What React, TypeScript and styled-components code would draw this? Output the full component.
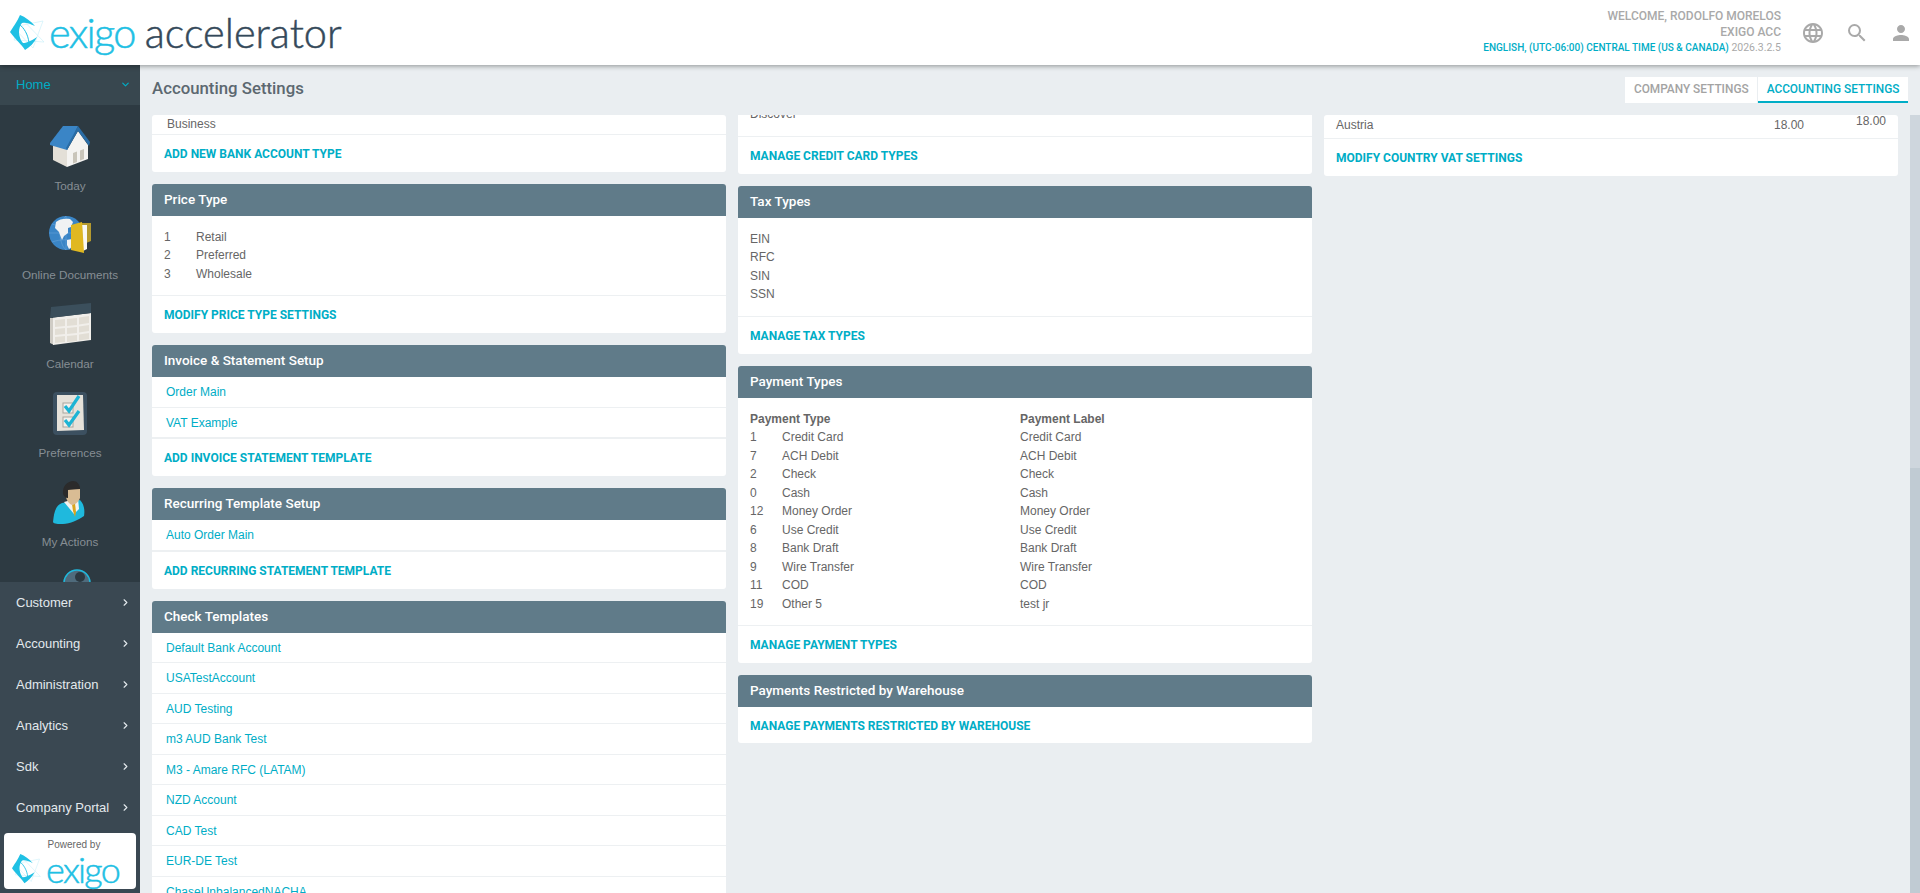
import { FC } from 'react'
import styled, { createGlobalStyle } from 'styled-components'
import { MdLanguage, MdSearch, MdPerson } from 'react-icons/md'
import { ChevronDown, ChevronRight } from 'lucide-react'

const GlobalStyle = createGlobalStyle`
  html, body {
    margin: 0;
    height: 100%;
    overflow: hidden;
    background: #eaeef1;
    font-family: "Liberation Sans", Arial, sans-serif;
  }
  * { box-sizing: border-box; }
`

const Page = styled.div`
  display: flex;
  flex-direction: column;
  width: 1920px;
  height: 893px;
`

const Header = styled.header`
  position: relative;
  z-index: 2;
  display: flex;
  justify-content: space-between;
  align-items: center;
  flex: 0 0 65px;
  padding: 0 7px 0 10px;
  background: white;
  box-shadow: 0 1px 5px rgba(0, 0, 0, 0.4);
`

const LogoWrap = styled.div`
  display: flex;
  align-items: center;
`

const LogoWord = styled.span<{ $dark?: boolean; $size: number; $gap: number }>`
  margin-left: ${p => p.$gap}px;
  font-family: Lato, "Open Sans", sans-serif;
  font-weight: 300;
  font-size: ${p => p.$size}px;
  line-height: 1;
  letter-spacing: ${p => (p.$dark ? 0 : -1.7)}px;
  color: ${p => (p.$dark ? '#34495a' : '#1fc0e4')};
  -webkit-text-stroke: 0.5px ${p => (p.$dark ? '#34495a' : '#1fc0e4')};
`

const HeaderRight = styled.div`
  display: flex;
  align-items: center;
`

const UserInfo = styled.div`
  margin-right: 20px;
  text-align: right;
  font-family: Roboto, sans-serif;
  font-weight: 500;
  color: #a9a9a9;
  font-size: 12px;
  line-height: 15.5px;
`

const Locale = styled.div`
  font-size: 10.5px;
  font-weight: 400;
  color: #a9a9a9;
  span { color: #00adc6; font-size: 10px; font-weight: 500; }
`

const HeaderIcons = styled.div`
  display: flex;
  gap: 20px;
  color: #a9a9a9;
  svg { display: block; }
`

const Body = styled.div`
  display: flex;
  flex: 1;
  min-height: 0;
`

const Sidebar = styled.nav`
  display: flex;
  flex-direction: column;
  flex: 0 0 140px;
  background: #2d3a42;
`

const HomeRow = styled.div`
  display: flex;
  justify-content: space-between;
  align-items: center;
  flex: 0 0 40px;
  padding: 0 9px 2px 16px;
  background: #38474f;
  color: #00adc6;
  font-size: 13px;
`

const Launcher = styled.div`
  flex: 1;
  min-height: 0;
  overflow: hidden;
  padding-top: 19px;
`

const LaunchItem = styled.div`
  display: flex;
  flex-direction: column;
  align-items: center;
  height: 89px;
`

const LaunchLabel = styled.div`
  margin-top: 11px;
  font-size: 11.7px;
  line-height: 14px;
  color: #868e94;
`

const MenuList = styled.div`
  flex: 0 0 311px;
  padding-bottom: 4px;
  background: #3a4852;
`

const MenuRow = styled.div`
  display: flex;
  justify-content: space-between;
  align-items: center;
  height: 41px;
  padding: 0 9px 1px 16px;
  color: #e3e9ed;
  font-size: 13px;
`

const PoweredBox = styled.div`
  display: flex;
  flex-direction: column;
  align-items: center;
  height: 56px;
  margin: 5px 4px 0;
  padding: 6px 0 0 8px;
  border-radius: 4px;
  background: white;
  color: #666;
  font-size: 10px;
  line-height: 12px;
`

const PoweredLogo = styled.div`
  display: flex;
  align-items: center;
  align-self: flex-start;
`

const Main = styled.main`
  display: flex;
  flex-direction: column;
  flex: 1;
  min-width: 0;
`

const TitleBar = styled.div`
  display: flex;
  justify-content: space-between;
  align-items: center;
  flex: 0 0 50px;
  padding: 0 12px;
`

const Title = styled.h1`
  margin: 0 0 4px;
  font-family: Roboto, sans-serif;
  font-weight: 500;
  font-size: 16.8px;
  color: #5c6870;
`

const Tabs = styled.div`
  display: flex;
  gap: 1px;
`

const Tab = styled.div<{ $active?: boolean }>`
  height: 26px;
  padding: 0 8.5px;
  background: white;
  font-family: Roboto, sans-serif;
  font-weight: 500;
  font-size: 11.85px;
  line-height: 25px;
  color: ${p => (p.$active ? '#00adc6' : '#a3a3a3')};
  border-bottom: 2px solid ${p => (p.$active ? '#00adc6' : 'white')};
`

const ScrollArea = styled.div`
  display: flex;
  flex: 1;
  min-height: 0;
  padding-left: 12px;
`

const Columns = styled.div`
  display: grid;
  grid-template-columns: repeat(3, 574px);
  gap: 12px;
  flex: 1;
  min-height: 0;
`

const Column = styled.div`
  display: flex;
  flex-direction: column;
  gap: 12px;
  min-height: 0;
  overflow: hidden;
`

const ScrollTrack = styled.div`
  flex: 0 0 10px;
  margin-left: 12px;
  padding-top: 353px;
  background: #ced6dd;
`

const ScrollThumb = styled.div`
  height: 100%;
  background: #c0cbd3;
`

const Panel = styled.section<{ $offset?: number }>`
  flex-shrink: 0;
  margin-top: ${p => (p.$offset ? -p.$offset : 0)}px;
  border-radius: 3px;
  background: white;
`

const PanelHead = styled.h2`
  height: 32px;
  margin: 0;
  padding: 0 12px;
  border-radius: 3px 3px 0 0;
  background: #607b89;
  font-family: Roboto, sans-serif;
  font-weight: 500;
  font-size: 13.5px;
  line-height: 30px;
  color: white;
`

const PanelBody = styled.div<{ $flushTop?: boolean }>`
  padding: ${p => (p.$flushTop ? 0 : 12)}px 12px 12px;
  font-size: 12px;
  line-height: 18.5px;
  color: #666;
`

const TableRow = styled.div<{ $wide?: boolean }>`
  display: grid;
  grid-template-columns: ${p => (p.$wide ? '32px 238px 1fr' : '32px 1fr')};
`

const HeadCell = styled.div<{ $span?: boolean }>`
  grid-column: ${p => (p.$span ? '1 / span 2' : 'auto')};
  font-weight: 700;
`

const ClippedRow = styled.div`
  height: 18.5px;
  padding-left: 15px;
  font-size: 12px;
  line-height: 18px;
  color: #666;
`

const VatRow = styled.div`
  display: grid;
  grid-template-columns: 1fr 82px 30px;
  align-items: start;
  height: 23px;
  padding: 0 12px;
  font-size: 12px;
  line-height: 20px;
  color: #666;
`

const RaisedCell = styled.span`
  margin-top: -4px;
`

const LinkRow = styled.div`
  height: 30.5px;
  padding-left: 14px;
  border-bottom: 1px solid #edf0f2;
  font-size: 12px;
  line-height: 30px;
  color: #00adc6;
`

const PanelFooter = styled.div<{ $plain?: boolean }>`
  height: ${p => (p.$plain ? 36 : 38)}px;
  padding: 1px 0 0 12px;
  border-top: ${p => (p.$plain ? 'none' : '1px solid #edf0f2')};
  font-family: Roboto, sans-serif;
  font-weight: 700;
  font-size: 12px;
  line-height: 37px;
  color: #00adc6;
  text-transform: uppercase;
`

const LogoMark: FC<{ size: number }> = ({ size }) => (
  <svg width={size} height={size} viewBox="0 0 36 36">
    <g fill="none" stroke="#c4eef8" strokeWidth="0.6">
      <path d="M3 12 L33 6 L23 33 Z" />
      <path d="M10 2 L34 27 L4 25 Z" />
    </g>
    <path fill="none" stroke="#1fc0e4" strokeWidth="1" d="M9 9 C14 13 18 19 19 28" />
    <path fill="#1fc0e4" d="M0 17 C3 12 7 7 10 0 C15 2 21 6 25 11 C19 8 15 7 12 8 C10 10 9 14 9 17 C9 21 11 26 13 28 C16 28 21 26 27 22 C24 28 20 32 15 35 C12 30 5 24 0 17 Z" />
  </svg>
)

const TodayIcon = () => (
  <svg width="44" height="44" viewBox="0 0 44 44">
    <path fill="#e3dfd7" d="M5 20 L19 22 V43 L5 36 Z" />
    <path fill="#f4f3f1" d="M19 26 L30 7 L40 21 V35 L19 43 Z" />
    <path fill="#c9c5ba" d="M25 29 L29 27.5 V38 L25 39.5 Z M32 26.5 L36 25 V35 L32 36.5 Z" />
    <path fill="#3a85c6" d="M2 19 L15 2 H30 L19 26 L2 21 Z" />
    <path fill="#2a6da6" d="M30 2 L42 18 L41 22 L30 7 L19 26 L18 24 Z" />
  </svg>
)

const DocumentsIcon = () => (
  <svg width="44" height="44" viewBox="0 0 44 44">
    <circle cx="18" cy="20" r="17" fill="#3a85c6" />
    <path fill="none" stroke="#6ea6d8" strokeWidth="0.5" d="M1 20 H35 M18 3 V37 M4 11 C12 14 24 14 32 11 M4 29 C12 26 24 26 32 29 M18 3 C10 10 10 30 18 37" />
    <path fill="#f0f2f3" d="M8 9 C11 6 17 5 22 6 L25 9 L23 14 L20 15 L20 20 L16 23 L14 27 L12 22 L11 19 L7 15 Z M19 27 L24 26 L24 34 L21 36 L19 32 Z" />
    <path fill="#b59a2e" d="M33 10 H43 V28 L36 31 Z" />
    <path fill="#f8f8f6" d="M34 12 H39 V36 L35 38 Z" />
    <path fill="#e0b821" d="M23 12 L34 9 L36 40 L23 37 Z" />
  </svg>
)

const CalendarIcon = () => (
  <svg width="44" height="44" viewBox="0 0 44 44">
    <path fill="#cfccc5" d="M2 16 L6 16 V43 L2 41 Z" />
    <path fill="#f1efeb" d="M5 15.5 L43 11 V38 L5 43 Z" />
    <path fill="#e2ded5" d="M7 18 L17 17 V24 L7 25 Z M19 17 L29 16 V23 L19 24 Z M31 15.5 L41 14 V21 L31 22.5 Z M7 27 L17 26 V32 L7 33 Z M19 26 L29 25 V31 L19 32 Z M31 24.5 L41 23 V29 L31 30.5 Z M7 35 L17 34 V40 L7 41 Z M19 34 L29 33 V39 L19 40 Z M31 32.5 L41 31 V37 L31 38.5 Z" />
    <path fill="#3b4f5c" d="M3 5 L43 1 V11 L2 16 Z" />
  </svg>
)

const PreferencesIcon = () => (
  <svg width="44" height="44" viewBox="0 0 44 44">
    <rect x="5" y="1" width="34" height="43" rx="4" fill="#3c5060" />
    <path fill="#e6e2da" d="M9 4 H35 L36 39 L9 40 Z" />
    <rect x="15" y="12" width="10" height="10" fill="#f2f0ec" stroke="#a9a69e" />
    <rect x="15" y="26" width="10" height="10" fill="#f2f0ec" stroke="#a9a69e" />
    <path fill="none" stroke="#1db4d4" strokeWidth="3.2" d="M17 15 L21 20 L31 5 M17 29 L21 34 L31 20" />
  </svg>
)

const ActionsIcon = () => (
  <svg width="44" height="44" viewBox="0 0 44 44">
    <path fill="#1fb9dd" d="M5 42 C6 33 7 26 14 23 L32 20 C36 24 37 30 36 36 C30 40 22 44 15 44 C10 44 6 44 5 42 Z" />
    <path fill="#f3f3f0" d="M16 22 L30 18 L31 29 L26 34 Z" />
    <path fill="#d9a61e" d="M24 24 L27 23 L28 32 L27 37 L25 31 Z" />
    <path fill="#d9bc94" d="M18 9 H32 V18 C30 23 26 25 24 25 C21 24 18 20 18 16 Z" />
    <path fill="#2b2b2b" d="M15 14 C14 6 20 1 25 1 C29 1 31 4 32 7 L32 9 C27 9 23 10 20 10 L20 18 C17 18 16 16 15 14 Z" />
  </svg>
)

const AnalyticsIcon = () => (
  <svg width="44" height="44" viewBox="0 0 44 44">
    <g transform="translate(7 0)">
      <circle cx="22" cy="14" r="13" fill="#4f6b7c" stroke="#1fb9dd" strokeWidth="1.5" />
      <circle cx="25" cy="8" r="5" fill="#2b3840" />
    </g>
  </svg>
)

const launchers = [
  { label: 'Today', icon: <TodayIcon /> },
  { label: 'Online Documents', icon: <DocumentsIcon /> },
  { label: 'Calendar', icon: <CalendarIcon /> },
  { label: 'Preferences', icon: <PreferencesIcon /> },
  { label: 'My Actions', icon: <ActionsIcon /> },
  { label: '', icon: <AnalyticsIcon /> },
]

const menuItems = ['Customer', 'Accounting', 'Administration', 'Analytics', 'Sdk', 'Company Portal']
const priceTypes = [['1', 'Retail'], ['2', 'Preferred'], ['3', 'Wholesale']]
const taxTypes = ['EIN', 'RFC', 'SIN', 'SSN']
const checkTemplates = [
  'Default Bank Account',
  'USATestAccount',
  'AUD Testing',
  'm3 AUD Bank Test',
  'M3 - Amare RFC (LATAM)',
  'NZD Account',
  'CAD Test',
  'EUR-DE Test',
  'ChaseUnbalancedNACHA',
]
const paymentTypes = [
  ['1', 'Credit Card', 'Credit Card'],
  ['7', 'ACH Debit', 'ACH Debit'],
  ['2', 'Check', 'Check'],
  ['0', 'Cash', 'Cash'],
  ['12', 'Money Order', 'Money Order'],
  ['6', 'Use Credit', 'Use Credit'],
  ['8', 'Bank Draft', 'Bank Draft'],
  ['9', 'Wire Transfer', 'Wire Transfer'],
  ['11', 'COD', 'COD'],
  ['19', 'Other 5', 'test jr'],
]

const App: FC = () => (
  <Page>
    <GlobalStyle />
    <Header>
      <LogoWrap>
        <LogoMark size={36} />
        <LogoWord $size={41.5} $gap={3}>exigo</LogoWord>
        <LogoWord $size={41.5} $gap={10} $dark>accelerator</LogoWord>
      </LogoWrap>
      <HeaderRight>
        <UserInfo>
          <div>WELCOME, RODOLFO MORELOS</div>
          <div>EXIGO ACC</div>
          <Locale><span>ENGLISH, (UTC-06:00) CENTRAL TIME (US &amp; CANADA)</span> 2026.3.2.5</Locale>
        </UserInfo>
        <HeaderIcons>
          <MdLanguage size={24} />
          <MdSearch size={24} />
          <MdPerson size={24} />
        </HeaderIcons>
      </HeaderRight>
    </Header>
    <Body>
      <Sidebar>
        <HomeRow>
          Home
          <ChevronDown size={11} strokeWidth={2.5} />
        </HomeRow>
        <Launcher>
          {launchers.map(item => (
            <LaunchItem key={item.label}>
              {item.icon}
              <LaunchLabel>{item.label}</LaunchLabel>
            </LaunchItem>
          ))}
        </Launcher>
        <MenuList>
          {menuItems.map(item => (
            <MenuRow key={item}>
              {item}
              <ChevronRight size={11} strokeWidth={2.5} />
            </MenuRow>
          ))}
          <PoweredBox>
            Powered by
            <PoweredLogo>
              <LogoMark size={30} />
              <LogoWord $size={36} $gap={4}>exigo</LogoWord>
            </PoweredLogo>
          </PoweredBox>
        </MenuList>
      </Sidebar>
      <Main>
        <TitleBar>
          <Title>Accounting Settings</Title>
          <Tabs>
            <Tab>COMPANY SETTINGS</Tab>
            <Tab $active>ACCOUNTING SETTINGS</Tab>
          </Tabs>
        </TitleBar>
        <ScrollArea>
          <Columns>
            <Column>
              <Panel>
                <ClippedRow>Business</ClippedRow>
                <PanelFooter>Add new bank account type</PanelFooter>
              </Panel>
              <Panel>
                <PanelHead>Price Type</PanelHead>
                <PanelBody>
                  {priceTypes.map(([id, name]) => (
                    <TableRow key={id}>
                      <div>{id}</div>
                      <div>{name}</div>
                    </TableRow>
                  ))}
                </PanelBody>
                <PanelFooter>Modify price type settings</PanelFooter>
              </Panel>
              <Panel>
                <PanelHead>Invoice &amp; Statement Setup</PanelHead>
                <LinkRow>Order Main</LinkRow>
                <LinkRow>VAT Example</LinkRow>
                <PanelFooter>Add invoice statement template</PanelFooter>
              </Panel>
              <Panel>
                <PanelHead>Recurring Template Setup</PanelHead>
                <LinkRow>Auto Order Main</LinkRow>
                <PanelFooter>Add recurring statement template</PanelFooter>
              </Panel>
              <Panel>
                <PanelHead>Check Templates</PanelHead>
                {checkTemplates.map(name => (
                  <LinkRow key={name}>{name}</LinkRow>
                ))}
              </Panel>
            </Column>
            <Column>
              <Panel $offset={10}>
                <PanelBody $flushTop>Discover</PanelBody>
                <PanelFooter>Manage credit card types</PanelFooter>
              </Panel>
              <Panel>
                <PanelHead>Tax Types</PanelHead>
                <PanelBody>
                  {taxTypes.map(name => (
                    <div key={name}>{name}</div>
                  ))}
                </PanelBody>
                <PanelFooter>Manage tax types</PanelFooter>
              </Panel>
              <Panel>
                <PanelHead>Payment Types</PanelHead>
                <PanelBody>
                  <TableRow $wide>
                    <HeadCell $span>Payment Type</HeadCell>
                    <HeadCell>Payment Label</HeadCell>
                  </TableRow>
                  {paymentTypes.map(([id, type, label]) => (
                    <TableRow $wide key={id}>
                      <div>{id}</div>
                      <div>{type}</div>
                      <div>{label}</div>
                    </TableRow>
                  ))}
                </PanelBody>
                <PanelFooter>Manage payment types</PanelFooter>
              </Panel>
              <Panel>
                <PanelHead>Payments Restricted by Warehouse</PanelHead>
                <PanelFooter $plain>Manage payments restricted by warehouse</PanelFooter>
              </Panel>
            </Column>
            <Column>
              <Panel>
                <VatRow>
                  <span>Austria</span>
                  <span>18.00</span>
                  <RaisedCell>18.00</RaisedCell>
                </VatRow>
                <PanelFooter>Modify country VAT settings</PanelFooter>
              </Panel>
            </Column>
          </Columns>
          <ScrollTrack>
            <ScrollThumb />
          </ScrollTrack>
        </ScrollArea>
      </Main>
    </Body>
  </Page>
)

export default App
